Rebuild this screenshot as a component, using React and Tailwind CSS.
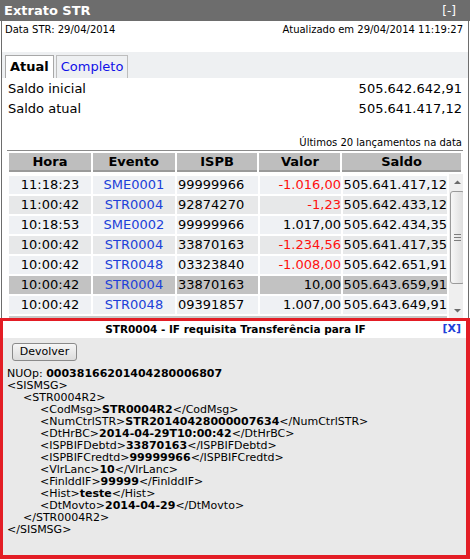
import React from 'react';

const ROWS = [
    { hora: '11:18:23', evento: 'SME0001', ispb: '99999966', valor: '-1.016,00', saldo: '505.641.417,12' },
    { hora: '11:00:42', evento: 'STR0004', ispb: '92874270', valor: '-1,23', saldo: '505.642.433,12' },
    { hora: '10:18:53', evento: 'SME0002', ispb: '99999966', valor: '1.017,00', saldo: '505.642.434,35' },
    { hora: '10:00:42', evento: 'STR0004', ispb: '33870163', valor: '-1.234,56', saldo: '505.641.417,35' },
    { hora: '10:00:42', evento: 'STR0048', ispb: '03323840', valor: '-1.008,00', saldo: '505.642.651,91' },
    { hora: '10:00:42', evento: 'STR0004', ispb: '33870163', valor: '10,00', saldo: '505.643.659,91', selected: true },
    { hora: '10:00:42', evento: 'STR0048', ispb: '09391857', valor: '1.007,00', saldo: '505.643.649,91' },
];

const XML = [
    { tag: 'CodMsg', value: 'STR0004R2' },
    { tag: 'NumCtrlSTR', value: 'STR20140428000007634' },
    { tag: 'DtHrBC', value: '2014-04-29T10:00:42' },
    { tag: 'ISPBIFDebtd', value: '33870163' },
    { tag: 'ISPBIFCredtd', value: '99999966' },
    { tag: 'VlrLanc', value: '10' },
    { tag: 'FinlddIF', value: '99999' },
    { tag: 'Hist', value: 'teste' },
    { tag: 'DtMovto', value: '2014-04-29' },
];

const App = () => {
    return (
        <div className="w-[470px] h-[559px] overflow-hidden bg-white text-black flex flex-col" style={{ fontFamily: '"DejaVu Sans", Verdana, sans-serif' }}>
            {/* title bar */}
            <div className="h-[21px] shrink-0 bg-[#6d6d6d] flex items-center justify-between pl-[4px] pr-[14px] text-white">
                <span className="text-[13px] font-bold">Extrato STR</span>
                <span className="text-[12px]">[-]</span>
            </div>

            <div className="h-[297px] shrink-0 ml-[1px] w-[468px] border-x border-[#6d6d6d] flex flex-col">
                <div className="flex justify-between text-[10px] leading-[12px] pl-[3px] pr-[5px] pt-[3px]">
                    <span>Data STR: 29/04/2014</span>
                    <span>Atualizado em 29/04/2014 11:19:27</span>
                </div>

                {/* tabs */}
                <div className="mt-[16px] h-[26px] bg-[#eef0f2] flex items-end pl-[3px] gap-[2px] text-[13px]">
                    <div className="h-[23px] px-[4px] bg-white border border-b-0 border-[#a8a8a8] font-bold flex items-center">Atual</div>
                    <div className="h-[23px] px-[4px] border border-b-0 border-[#bdbdbd] text-[#1010e8] flex items-center">Completo</div>
                </div>

                <div className="pl-[6px] pr-[6px] text-[13px] leading-[20px] pt-[1px]">
                    <div className="flex justify-between"><span>Saldo inicial</span><span>505.642.642,91</span></div>
                    <div className="flex justify-between"><span>Saldo atual</span><span>505.641.417,12</span></div>
                </div>

                <div className="mt-[18px] mx-[5px] text-right text-[10px] leading-[12px] pr-[1px] border-b border-[#8a8a8a] pb-[1px]">
                    Últimos 20 lançamentos na data
                </div>

                {/* table header */}
                <div className="mx-[5px] flex gap-[2px] px-[2px] pt-[2px] text-[13px] font-bold">
                    <div className="w-[82px] h-[19px] bg-[#bebebe] border-b-2 border-[#9a9a9a] flex items-center justify-center">Hora</div>
                    <div className="w-[82px] h-[19px] bg-[#bebebe] border-b-2 border-[#9a9a9a] flex items-center justify-center">Evento</div>
                    <div className="w-[81px] h-[19px] bg-[#bebebe] border-b-2 border-[#9a9a9a] flex items-center justify-center">ISPB</div>
                    <div className="w-[81px] h-[19px] bg-[#bebebe] border-b-2 border-[#9a9a9a] flex items-center justify-center">Valor</div>
                    <div className="w-[119px] h-[19px] bg-[#bebebe] border-b-2 border-[#9a9a9a] flex items-center justify-center">Saldo</div>
                </div>

                {/* table body */}
                <div className="mx-[5px] mt-[2px] h-[144px] overflow-hidden flex">
                    <div className="flex-1 flex flex-col gap-[2px] px-[2px] pt-[2px] text-[13px]">
                        {ROWS.map((r, i) => {
                            const bg = r.selected ? 'bg-[#c2c2c2]' : i % 2 === 0 ? 'bg-[#eff1f4]' : 'bg-[#e7e8e9]';
                            return (
                                <div key={i} className="flex gap-[2px] h-[18px] shrink-0 leading-[18px]">
                                    <div className={`w-[82px] text-center ${bg}`}>{r.hora}</div>
                                    <div className={`w-[82px] text-center text-[#2040d8] ${bg}`}>{r.evento}</div>
                                    <div className={`w-[81px] pl-[1px] ${bg}`}>{r.ispb}</div>
                                    <div className={`w-[81px] text-right ${r.valor.startsWith('-') ? 'text-[#ff1010]' : ''} ${bg}`}>{r.valor}</div>
                                    <div className={`w-[104px] text-right ${bg}`}>{r.saldo}</div>
                                </div>
                            );
                        })}
                        <div className="h-[4px] shrink-0 bg-[#c8c8c8]" />
                    </div>
                    {/* scrollbar */}
                    <div className="w-[17px] shrink-0 bg-[#efefef] flex flex-col items-center pt-[4px] pb-[4px]">
                        <svg width="9" height="6" viewBox="0 0 9 6" className="mt-[1px]"><path d="M1 5 L4.5 1.5 L8 5 Z" fill="#6a6a6a" /></svg>
                        <div className="mt-[6px] w-[15px] h-[93px] rounded-[3px] border border-[#9a9a9a] bg-gradient-to-r from-[#f7f7f7] to-[#dcdcdc] flex flex-col items-center justify-center gap-[2px]">
                            <div className="w-[7px] h-px bg-[#7d7d7d]" />
                            <div className="w-[7px] h-px bg-[#7d7d7d]" />
                            <div className="w-[7px] h-px bg-[#7d7d7d]" />
                        </div>
                        <div className="flex-1" />
                        <svg width="9" height="6" viewBox="0 0 9 6"><path d="M1 1 L4.5 4.5 L8 1 Z" fill="#6a6a6a" /></svg>
                    </div>
                </div>
            </div>

            {/* message popup */}
            <div className="flex-1 border-[3px] border-r-4 border-b-4 border-[#e31d25] bg-[#e9e9e9] flex flex-col">
                <div className="h-[17px] bg-white flex items-center relative text-[10.5px] font-bold">
                    <span className="flex-1 text-center pl-[2px]">STR0004 - IF requisita Transferência para IF</span>
                    <span className="absolute right-[5px] text-[11px] text-[#2040d8]">[X]</span>
                </div>
                <div className="pl-[4px] pt-[5px] text-[11px] leading-[12px]">
                    <button className="ml-[5px] h-[18px] w-[65px] rounded-[3px] border border-[#8a8a8a] bg-gradient-to-b from-[#f6f6f6] to-[#dcdcdc] text-[11px] text-black">Devolver</button>
                    <div className="mt-[7px]">
                        <div>NUOp: <b>00038166201404280006807</b></div>
                        <div>&lt;SISMSG&gt;</div>
                        <div className="pl-[16px]">&lt;STR0004R2&gt;</div>
                        {XML.map((x) => (
                            <div key={x.tag} className="pl-[33px]">
                                &lt;{x.tag}&gt;<b>{x.value}</b>&lt;/{x.tag}&gt;
                            </div>
                        ))}
                        <div className="pl-[16px]">&lt;/STR0004R2&gt;</div>
                        <div>&lt;/SISMSG&gt;</div>
                    </div>
                </div>
            </div>
        </div>
    );
};

export default App;
